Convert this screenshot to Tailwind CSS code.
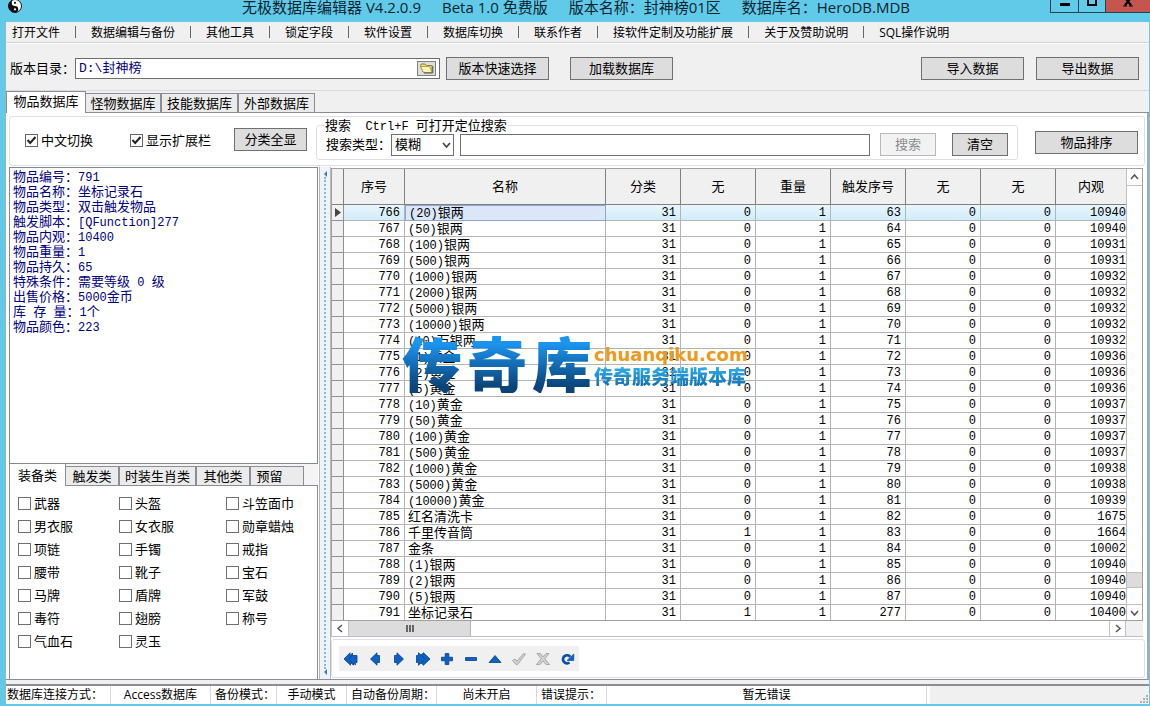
<!DOCTYPE html>
<html lang="zh-CN">
<head>
<meta charset="utf-8">
<title>无极数据库编辑器</title>
<script src="https://cdn.jsdelivr.net/npm/@tailwindcss/browser@4"></script>
</head>
<body class="h-screen overflow-hidden bg-[#62cae9] font-['Liberation_Sans','Noto_Sans_CJK_SC',sans-serif] text-[13px] leading-[15px] text-black">
<div class="flex h-full flex-col">

  <!-- title bar -->
  <header class="flex h-[22px] shrink-0 items-start">
    <svg class="ml-2 h-[14px] w-[14px] shrink-0" viewBox="0 0 14 14"><circle cx="7" cy="6" r="6.5" fill="#fff" stroke="#111" stroke-width="1"/><path d="M7 -.5A6.5 6.5 0 0 0 7 12.500A3.250 3.250 0 0 0 7 6A3.250 3.250 0 0 1 7 -.5Z" fill="#111"/><circle cx="7" cy="2.800" r="1.100" fill="#111"/><circle cx="7" cy="9.300" r="1.100" fill="#fff"/></svg>
    <h1 class="flex flex-1 justify-center gap-[21px] pl-[80px] font-['Open_Sans','Noto_Sans_CJK_SC',sans-serif] text-[15px] leading-[14px] whitespace-nowrap text-[#0a2530]">
      <span>无极数据库编辑器 V4.2.0.9</span><span>Beta 1.0 免费版</span><span>版本名称：封神榜01区</span><span>数据库名：HeroDB.MDB</span>
    </h1>
    <div class="flex h-[13px] w-[100px] border-b border-l border-[#24454f]">
      <button aria-label="最小化" class="flex w-[28px] justify-center border-r border-[#24454f]"><svg class="h-3 w-3" viewBox="0 0 12 12"><path d="M1 4.500h10" stroke="#000" stroke-width="3"/></svg></button>
      <button aria-label="最大化" class="flex w-[27px] justify-center border-r border-[#24454f]"><svg class="h-3 w-3" viewBox="0 0 12 12"><path d="M2 -2V5h8V-2" fill="none" stroke="#000" stroke-width="2"/></svg></button>
      <button aria-label="关闭" class="flex flex-1 justify-center bg-[#c4554f]"><svg class="h-3 w-3" viewBox="0 0 12 12"><path d="M2-4L9 5.500M10-4L3 5.500" stroke="#000" stroke-width="2.200"/><path d="M1 6h4M7 6h4" stroke="#000"/></svg></button>
    </div>
  </header>

  <div class="mr-px mb-[2px] ml-[5px] flex min-h-0 flex-1 flex-col border-l border-[#a0b4bc] bg-[#f0f0f0]">
    <!-- menu -->
    <nav class="flex h-[21px] shrink-0 items-center gap-[15px] border-b border-[#d4d4d4] pl-[6px] font-['Open_Sans','Noto_Sans_CJK_SC',sans-serif] text-[12px] whitespace-nowrap">
      <button>打开文件</button><i class="h-3 w-px bg-[#666]"></i>
      <button>数据编辑与备份</button><i class="h-3 w-px bg-[#666]"></i>
      <button>其他工具</button><i class="h-3 w-px bg-[#666]"></i>
      <button>锁定字段</button><i class="h-3 w-px bg-[#666]"></i>
      <button>软件设置</button><i class="h-3 w-px bg-[#666]"></i>
      <button>数据库切换</button><i class="h-3 w-px bg-[#666]"></i>
      <button>联系作者</button><i class="h-3 w-px bg-[#666]"></i>
      <button>接软件定制及功能扩展</button><i class="h-3 w-px bg-[#666]"></i>
      <button>关于及赞助说明</button><i class="h-3 w-px bg-[#666]"></i>
      <button>SQL操作说明</button>
    </nav>

    <!-- folder row -->
    <div class="flex h-[48px] shrink-0 items-center border-t border-b border-t-white border-b-[#dadada] pt-[2px] pr-[10px] pl-[4px]">
      <label for="dir" class="w-[65px] whitespace-nowrap">版本目录：</label>
      <div class="flex h-[21px] w-[365px] items-center border border-[#6e6e6e] bg-white pr-[3px]">
        <input id="dir" value="D:\封神榜" class="min-w-0 flex-1 px-[3px] font-['Liberation_Mono','Noto_Sans_CJK_SC',monospace] text-[13px] text-[#000080] outline-none">
        <button aria-label="浏览" class="flex h-[15px] w-[19px] items-center justify-center border border-[#808080] bg-[#dedede]"><svg class="h-3 w-4" viewBox="0 0 16 12"><path d="M1.500 3.500Q1.500 2 3 2h3l1.500 1.500H13V10H4Z" fill="#e9dc7a" stroke="#8d8240"/><path d="M1.500 4.500H10.500L13 10.500H4.500Z" fill="#fbf6b0" stroke="#9c9148" stroke-width=".8"/><path d="M13.800 4v7H5" fill="none" stroke="#555"/></svg></button>
      </div>
      <button class="ml-[6px] h-[23px] w-[103px] border border-[#707070] bg-[#dddddd]">版本快速选择</button>
      <button class="ml-[21px] h-[23px] w-[103px] border border-[#707070] bg-[#dddddd]">加载数据库</button>
      <button class="ml-auto h-[23px] w-[103px] border border-[#707070] bg-[#dddddd]">导入数据</button>
      <button class="ml-[12px] h-[23px] w-[103px] border border-[#707070] bg-[#dddddd]">导出数据</button>
    </div>

    <!-- main tabs -->
    <div class="flex h-[22px] shrink-0 items-end border-b border-[#8c8c94] whitespace-nowrap">
      <button class="-mb-px h-[22px] w-[80px] border border-b-0 border-[#8c8c94] bg-white pb-[2px]">物品数据库</button>
      <button class="h-[19px] w-[75px] border border-b-0 border-l-0 border-[#8c8c94] bg-[#ebebeb]">怪物数据库</button>
      <button class="h-[19px] w-[77px] border border-b-0 border-[#8c8c94] bg-[#ebebeb]">技能数据库</button>
      <button class="h-[19px] w-[77px] border border-b-0 border-[#8c8c94] bg-[#ebebeb]">外部数据库</button>
    </div>

    <main class="flex min-h-0 flex-1 flex-col border-r-2 border-b border-r-[#a8a8ac] border-b-[#8c8c94] bg-white pt-[3px] pl-[3px]">
      <!-- filter bar -->
      <section class="mr-[2px] flex h-[50px] shrink-0 items-start rounded-[3px] border border-[#dce0e6] pr-[6px] pl-[15px]">
        <label class="mt-[16px] flex w-[105px] items-center gap-[3px] whitespace-nowrap">
          <span class="grid"><input type="checkbox" checked class="peer col-start-1 row-start-1 h-[13px] w-[13px] appearance-none border border-[#666] bg-white"><svg class="pointer-events-none invisible col-start-1 row-start-1 h-[13px] w-[13px] peer-checked:visible" viewBox="0 0 13 13"><path d="M2.500 6L5.200 9L10.500 3" fill="none" stroke="#222" stroke-width="2"/></svg></span>中文切换</label>
        <label class="mt-[16px] flex w-[104px] items-center gap-[3px] whitespace-nowrap">
          <span class="grid"><input type="checkbox" checked class="peer col-start-1 row-start-1 h-[13px] w-[13px] appearance-none border border-[#666] bg-white"><svg class="pointer-events-none invisible col-start-1 row-start-1 h-[13px] w-[13px] peer-checked:visible" viewBox="0 0 13 13"><path d="M2.500 6L5.200 9L10.500 3" fill="none" stroke="#222" stroke-width="2"/></svg></span>显示扩展栏</label>
        <button class="mt-[11px] h-[23px] w-[73px] border border-[#707070] bg-[#dddddd]">分类全显</button>
        <fieldset class="mt-[1px] ml-[9px] h-[42px] min-w-0 flex-1 rounded-[3px] border border-[#dce0e6] pr-[9px] pl-[7px]">
          <legend class="flex h-[15px] items-baseline px-[1px] whitespace-pre">搜索<span class="font-['Liberation_Mono',monospace] text-[12px]">  Ctrl+F </span>可打开定位搜索</legend>
          <div class="flex items-center">
            <label for="kind" class="w-[67px] pl-[2px] whitespace-nowrap">搜索类型：</label>
            <span class="grid h-[22px] w-[63px]">
              <select id="kind" class="col-start-1 row-start-1 appearance-none border border-[#707070] bg-white pl-[3px] leading-[15px]"><option>模糊</option><option>精确</option></select>
              <svg class="pointer-events-none col-start-1 row-start-1 mr-[3px] h-2 w-[9px] self-center justify-self-end" viewBox="0 0 9 8"><path d="M1 2L4.500 6L8 2" fill="none" stroke="#444" stroke-width="1.700"/></svg>
            </span>
            <input aria-label="搜索内容" class="ml-[6px] h-[22px] min-w-0 flex-1 border border-[#707070] bg-white px-1 outline-none">
            <button disabled class="ml-[10px] h-[23px] w-[56px] border border-[#b8b8b8] bg-[#f2f2f2] text-[#8c8c8c]">搜索</button>
            <button class="ml-[16px] h-[23px] w-[56px] border border-[#707070] bg-[#dddddd]">清空</button>
          </div>
        </fieldset>
        <button class="mt-[14px] ml-[17px] h-[23px] w-[103px] border border-[#707070] bg-[#dddddd]">物品排序</button>
      </section>

      <div class="mt-px flex min-h-0 flex-1">
        <!-- left column -->
        <aside class="flex w-[309px] shrink-0 flex-col">
          <div class="min-h-0 flex-1 border border-[#828790] pt-px pl-[3px] text-[#000080] [&>p]:flex [&>p]:h-[15px] [&>p]:items-baseline [&>p]:whitespace-pre">
            <p>物品编号：<span class="font-['Liberation_Mono',monospace] text-[12px]">791</span></p>
            <p>物品名称：坐标记录石</p>
            <p>物品类型：双击触发物品</p>
            <p>触发脚本：<span class="font-['Liberation_Mono',monospace] text-[12px]">[QFunction]277</span></p>
            <p>物品内观：<span class="font-['Liberation_Mono',monospace] text-[12px]">10400</span></p>
            <p>物品重量：<span class="font-['Liberation_Mono',monospace] text-[12px]">1</span></p>
            <p>物品持久：<span class="font-['Liberation_Mono',monospace] text-[12px]">65</span></p>
            <p>特殊条件：需要等级<span class="font-['Liberation_Mono',monospace] text-[12px]"> 0 </span>级</p>
            <p>出售价格：<span class="font-['Liberation_Mono',monospace] text-[12px]">5000</span>金币</p>
            <p>库<span class="font-['Liberation_Mono',monospace] text-[12px]"> </span>存<span class="font-['Liberation_Mono',monospace] text-[12px]"> </span>量：<span class="font-['Liberation_Mono',monospace] text-[12px]">1</span>个</p>
            <p>物品颜色：<span class="font-['Liberation_Mono',monospace] text-[12px]">223</span></p>
          </div>
          <div class="flex h-[22px] shrink-0 items-end border-b border-[#8c8c94] bg-[#f4f4f4] whitespace-nowrap">
            <button class="-mb-px h-[22px] w-[57px] border border-t-0 border-b-0 border-[#8c8c94] bg-white">装备类</button>
            <button class="h-[19px] w-[53px] border border-b-0 border-l-0 border-[#8c8c94] bg-[#ebebeb]">触发类</button>
            <button class="h-[19px] w-[77px] border border-b-0 border-[#8c8c94] bg-[#ebebeb]">时装生肖类</button>
            <button class="h-[19px] w-[54px] border border-b-0 border-[#8c8c94] bg-[#ebebeb]">其他类</button>
            <button class="h-[19px] w-[54px] border border-b-0 border-[#8c8c94] bg-[#ebebeb] pr-[15px]">预留</button>
          </div>
          <div id="kinds" class="grid h-[193px] shrink-0 auto-rows-[23px] grid-cols-[101px_107px_1fr] content-start border-x border-[#8c8c94] pt-[6px] pl-[8px] whitespace-nowrap"></div>
        </aside>

        <!-- splitter -->
        <div class="ml-px flex w-[12px] shrink-0 flex-col items-center border-r border-l border-[#b8b8bc] bg-[#eef3f8] py-[4px]">
          <svg class="h-[6px] w-[5px]" viewBox="0 0 5 6"><path d="M4 0V6L1 3Z" fill="#3a7dbd"/></svg>
          <div class="w-0 flex-1 border-l-2 border-dotted border-[#8fb4d8]"></div>
          <svg class="h-[6px] w-[5px]" viewBox="0 0 5 6"><path d="M4 0V6L1 3Z" fill="#3a7dbd"/></svg>
        </div>

        <!-- data grid -->
        <section class="mt-px flex min-w-0 flex-1 flex-col">
          <div class="relative mr-[4px] flex min-h-0 flex-1 border border-[#a0a0a0]">
            <div class="min-w-0 flex-1 overflow-hidden">
              <table class="w-full table-fixed border-separate border-spacing-0">
                <colgroup><col class="w-[12px]"><col class="w-[61px]"><col class="w-[201px]"><col class="w-[75px]"><col class="w-[75px]"><col class="w-[75px]"><col class="w-[75px]"><col class="w-[75px]"><col class="w-[75px]"><col></colgroup>
                <thead><tr class="h-[36px] bg-[#f0f0f0] [&>th]:border-r [&>th]:border-b [&>th]:border-[#808080] [&>th]:p-0 [&>th]:font-normal [&>th:last-child]:border-r-0"><th></th><th>序号</th><th>名称</th><th>分类</th><th>无</th><th>重量</th><th>触发序号</th><th>无</th><th>无</th><th>内观</th></tr></thead>
                <tbody id="rows"></tbody>
              </table>
            </div>
            <div class="flex w-[16px] shrink-0 flex-col border-l border-[#c0c0c0] bg-white">
              <button aria-label="向上" class="flex h-[17px] items-center justify-center border-b border-[#c0c0c0]"><svg class="h-2 w-[9px]" viewBox="0 0 9 8"><path d="M1 6L4.500 2L8 6" fill="none" stroke="#555" stroke-width="1.500"/></svg></button>
              <div class="flex-1"></div>
              <div class="h-[16px] border-y border-[#c0c0c0] bg-[#dcdcdc]"></div>
              <div class="h-[16px]"></div>
              <button aria-label="向下" class="flex h-[16px] items-center justify-center border-t border-[#c0c0c0]"><svg class="h-2 w-[9px]" viewBox="0 0 9 8"><path d="M1 2L4.500 6L8 2" fill="none" stroke="#555" stroke-width="1.500"/></svg></button>
            </div>

            <!-- logo floating over the rows -->
            <div class="pointer-events-none absolute top-[162px] left-[70px] flex items-center whitespace-nowrap">
              <div class="flex gap-[5px] bg-linear-to-b from-[#1b95f0] from-20% to-[#0b4478] to-90% bg-clip-text pr-[2px] font-['Noto_Sans_CJK_SC',sans-serif] text-[60px] leading-[62px] font-black text-transparent"><span>传</span><span>奇</span><span>库</span></div>
              <div class="flex flex-col pt-[6px]">
                <span class="font-['DejaVu_Sans',sans-serif] text-[18px] leading-[20px] font-bold text-[#eb9a1c]">chuanqiku.com</span>
                <span class="bg-linear-to-b from-[#35b4ec] to-[#1272b8] bg-clip-text font-['Noto_Sans_CJK_SC',sans-serif] text-[19px] leading-[21px] font-black text-transparent">传奇服务端版本库</span>
              </div>
            </div>
          </div>
          <div class="mr-[4px] flex h-[16px] shrink-0 border-b border-l border-[#c0c0c0] bg-white">
            <button aria-label="向左" class="flex w-[17px] items-center justify-center border-r border-[#c0c0c0]"><svg class="h-[9px] w-2" viewBox="0 0 8 9"><path d="M6 1L2 4.500L6 8" fill="none" stroke="#555" stroke-width="1.500"/></svg></button>
            <div class="flex w-[122px] items-center justify-center gap-px border-r border-[#b4b4b4] bg-[#dcdcdc]"><i class="h-[7px] w-[2px] bg-[#666]"></i><i class="h-[7px] w-[2px] bg-[#666]"></i><i class="h-[7px] w-[2px] bg-[#666]"></i></div>
            <div class="flex-1"></div>
            <button aria-label="向右" class="flex w-[17px] items-center justify-center border-x border-[#c0c0c0]"><svg class="h-[9px] w-2" viewBox="0 0 8 9"><path d="M2 1L6 4.500L2 8" fill="none" stroke="#555" stroke-width="1.500"/></svg></button>
            <div class="w-[17px] bg-[#f0f0f0]"></div>
          </div>
          <div class="mt-[2px] mr-[2px] mb-px flex h-[39px] shrink-0 items-center rounded-[3px] border border-[#dce0e6] pl-[7px]">
            <div class="flex h-[25px] bg-[#f0f0f0] [&>button]:flex [&>button]:w-6 [&>button]:items-center [&>button]:justify-center [&_svg]:h-[14px] [&_svg]:w-4">
              <button aria-label="首条"><svg viewBox="0 0 16 14"><path d="M7 .8V3.500L9.500 1V3.500H14V10.500H12.500V13L10.500 11V13.200L7.500 10.500V13.200L1 7L7 .8Z" fill="#0b62c4" stroke="#083f87" stroke-width=".8"/><path d="M9.500 3L6 7L9.500 11" fill="none" stroke="#083f87" stroke-width=".7"/></svg></button>
              <button aria-label="上一条"><svg viewBox="0 0 16 14"><path d="M10 .8V3.500H12.500V10.500H10V13.200L3.500 7Z" fill="#0b62c4" stroke="#083f87" stroke-width=".8"/></svg></button>
              <button aria-label="下一条"><svg viewBox="0 0 16 14"><path d="M6 .8V3.500H3.500V10.500H6V13.200L12.500 7Z" fill="#0b62c4" stroke="#083f87" stroke-width=".8"/></svg></button>
              <button aria-label="末条"><svg viewBox="0 0 16 14"><path d="M3.500 .8V3.500H1.500V10.500H3.500V13.200L6 11L8.500 13.200L15 7L8.500 .8L6 3Z" fill="#0b62c4" stroke="#083f87" stroke-width=".8"/><path d="M6.500 3L10 7L6.500 11" fill="none" stroke="#083f87" stroke-width=".7"/></svg></button>
              <button aria-label="添加"><svg viewBox="0 0 16 14"><path d="M6.200 1.500H9.800V5.200H13.500V8.800H9.800V12.500H6.200V8.800H2.500V5.200H6.200Z" fill="#0b62c4" stroke="#083f87" stroke-width=".8"/></svg></button>
              <button aria-label="删除"><svg viewBox="0 0 16 14"><path d="M2.500 5.500H13.500V8.500H2.500Z" fill="#0b62c4" stroke="#083f87" stroke-width=".8"/></svg></button>
              <button aria-label="编辑"><svg viewBox="0 0 16 14"><path d="M8 3.500L14 10.500H2Z" fill="#0b62c4" stroke="#083f87" stroke-width=".8"/></svg></button>
              <button aria-label="提交"><svg viewBox="0 0 16 14"><path d="M1.500 8.500L4 7L6 9.200L12.500 1.500L14.500 2.200L6.500 12.500H5Z" fill="#d0d0d0" stroke="#999" stroke-width=".8"/></svg></button>
              <button aria-label="取消"><svg viewBox="0 0 16 14"><path d="M2 1.500H5.500L8 4.800L11 1.500H14L9.800 6.800L14.500 12.500H11L8 9L5 12.500H1.500L6.200 6.800Z" fill="#d0d0d0" stroke="#999" stroke-width=".8"/></svg></button>
              <button aria-label="刷新"><svg viewBox="0 0 16 14"><path d="M10.500 10.500A4 4 0 1 1 11.200 4.800" fill="none" stroke="#0a4fa6" stroke-width="2.800"/><path d="M14.800 2V8.500H8Z" fill="#0b62c4" stroke="#083f87" stroke-width=".6"/></svg></button>
            </div>
          </div>
        </section>
      </div>
    </main>

    <!-- status bar -->
    <footer class="mt-[4px] flex h-[20px] shrink-0 border-t-2 border-[#8c8c94] bg-white font-['Open_Sans','Noto_Sans_CJK_SC',sans-serif] text-[12px] leading-[18px] whitespace-nowrap [&>span]:border-r [&>span]:border-[#d8d8d8]">
      <span class="w-[105px] pl-[1px]">数据库连接方式：</span><span class="w-[100px] text-center">Access数据库</span><span class="w-[66px] pl-[4px]">备份模式：</span><span class="w-[70px] text-center">手动模式</span><span class="w-[90px] pl-[4px]">自动备份周期：</span><span class="w-[100px] text-center">尚未开启</span><span class="w-[70px] pl-[4px]">错误提示：</span><span class="w-[320px] text-center">暂无错误</span>
      <div class="ml-[3px] flex flex-1 items-end justify-end bg-[#f0f0f0]"><svg class="h-[10px] w-[10px]" viewBox="0 0 10 10" fill="#b0b0b0"><path d="M7 1h2v2h-2zM4 4h2v2h-2zM7 4h2v2h-2zM1 7h2v2h-2zM4 7h2v2h-2zM7 7h2v2h-2z"/></svg></div>
    </footer>
  </div>
</div>

<script>
const looks = [10940,10940,10931,10931,10932,10932,10932,10932,10932,10936,10936,10936,10937,10937,10937,10937,10938,10938,10939,1675,1664,10002,10940,10940,10940,10400];
const names = ['(20)|银两','(50)|银两','(100)|银两','(500)|银两','(1000)|银两','(2000)|银两','(5000)|银两','(10000)|银两','(10)|万银两','(1)|黄金','(2)|黄金','(5)|黄金','(10)|黄金','(50)|黄金','(100)|黄金','(500)|黄金','(1000)|黄金','(5000)|黄金','(10000)|黄金','|红名清洗卡','|千里传音筒','|金条','(1)|银两','(2)|银两','(5)|银两','|坐标记录石'];
const num = v => `<td class="border-r border-b border-[#b4b4b4] p-0 pt-px pr-[4px] text-right font-['Liberation_Mono',monospace] text-[12px] leading-[14px]">${v}</td>`;
document.getElementById('rows').innerHTML = names.map((n, i) => {
  const [latin, han] = n.split('|');
  const id = 766 + i;
  const flag = id === 786 || id === 791 ? 1 : 0;
  const mark = i ? '' : '<svg class="mx-auto h-[9px] w-[6px]" viewBox="0 0 6 9"><path d="M0 0L6 4.500L0 9Z" fill="#444"/></svg>';
  const cell = i ? 'border-r border-b border-[#b4b4b4]' : 'border border-[#8ea6cf] bg-[#dbe7f8]';
  return `<tr class="h-[16px] ${i ? 'bg-white' : 'bg-linear-to-b from-[#e8f6fd] to-[#cfebfa]'}">
    <td class="border-r border-b border-[#909090] bg-[#f0f0f0] p-0">${mark}</td>${num(id)}
    <td class="${cell} p-0 pl-[3px] leading-[14px]"><div class="flex h-[14px] items-baseline"><span class="font-['Liberation_Mono',monospace] text-[12px]">${latin}</span>${han}</div></td>
    ${num(31)}${num(flag)}${num(1)}${num(id === 791 ? 277 : id - 703)}${num(0)}${num(0)}
    <td class="border-b border-[#b4b4b4] p-0 pt-px text-right font-['Liberation_Mono',monospace] text-[12px] leading-[14px]">${looks[i]}</td></tr>`;
}).join('');
const kinds = ['武器','头盔','斗笠面巾','男衣服','女衣服','勋章蜡烛','项链','手镯','戒指','腰带','靴子','宝石','马牌','盾牌','军鼓','毒符','翅膀','称号','气血石','灵玉'];
document.getElementById('kinds').innerHTML = kinds.map(k =>
  `<label class="flex items-center gap-[3px]"><input type="checkbox" class="h-[13px] w-[13px] appearance-none border border-[#707070] bg-white checked:bg-[#555]">${k}</label>`).join('');
</script>
</body>
</html>
